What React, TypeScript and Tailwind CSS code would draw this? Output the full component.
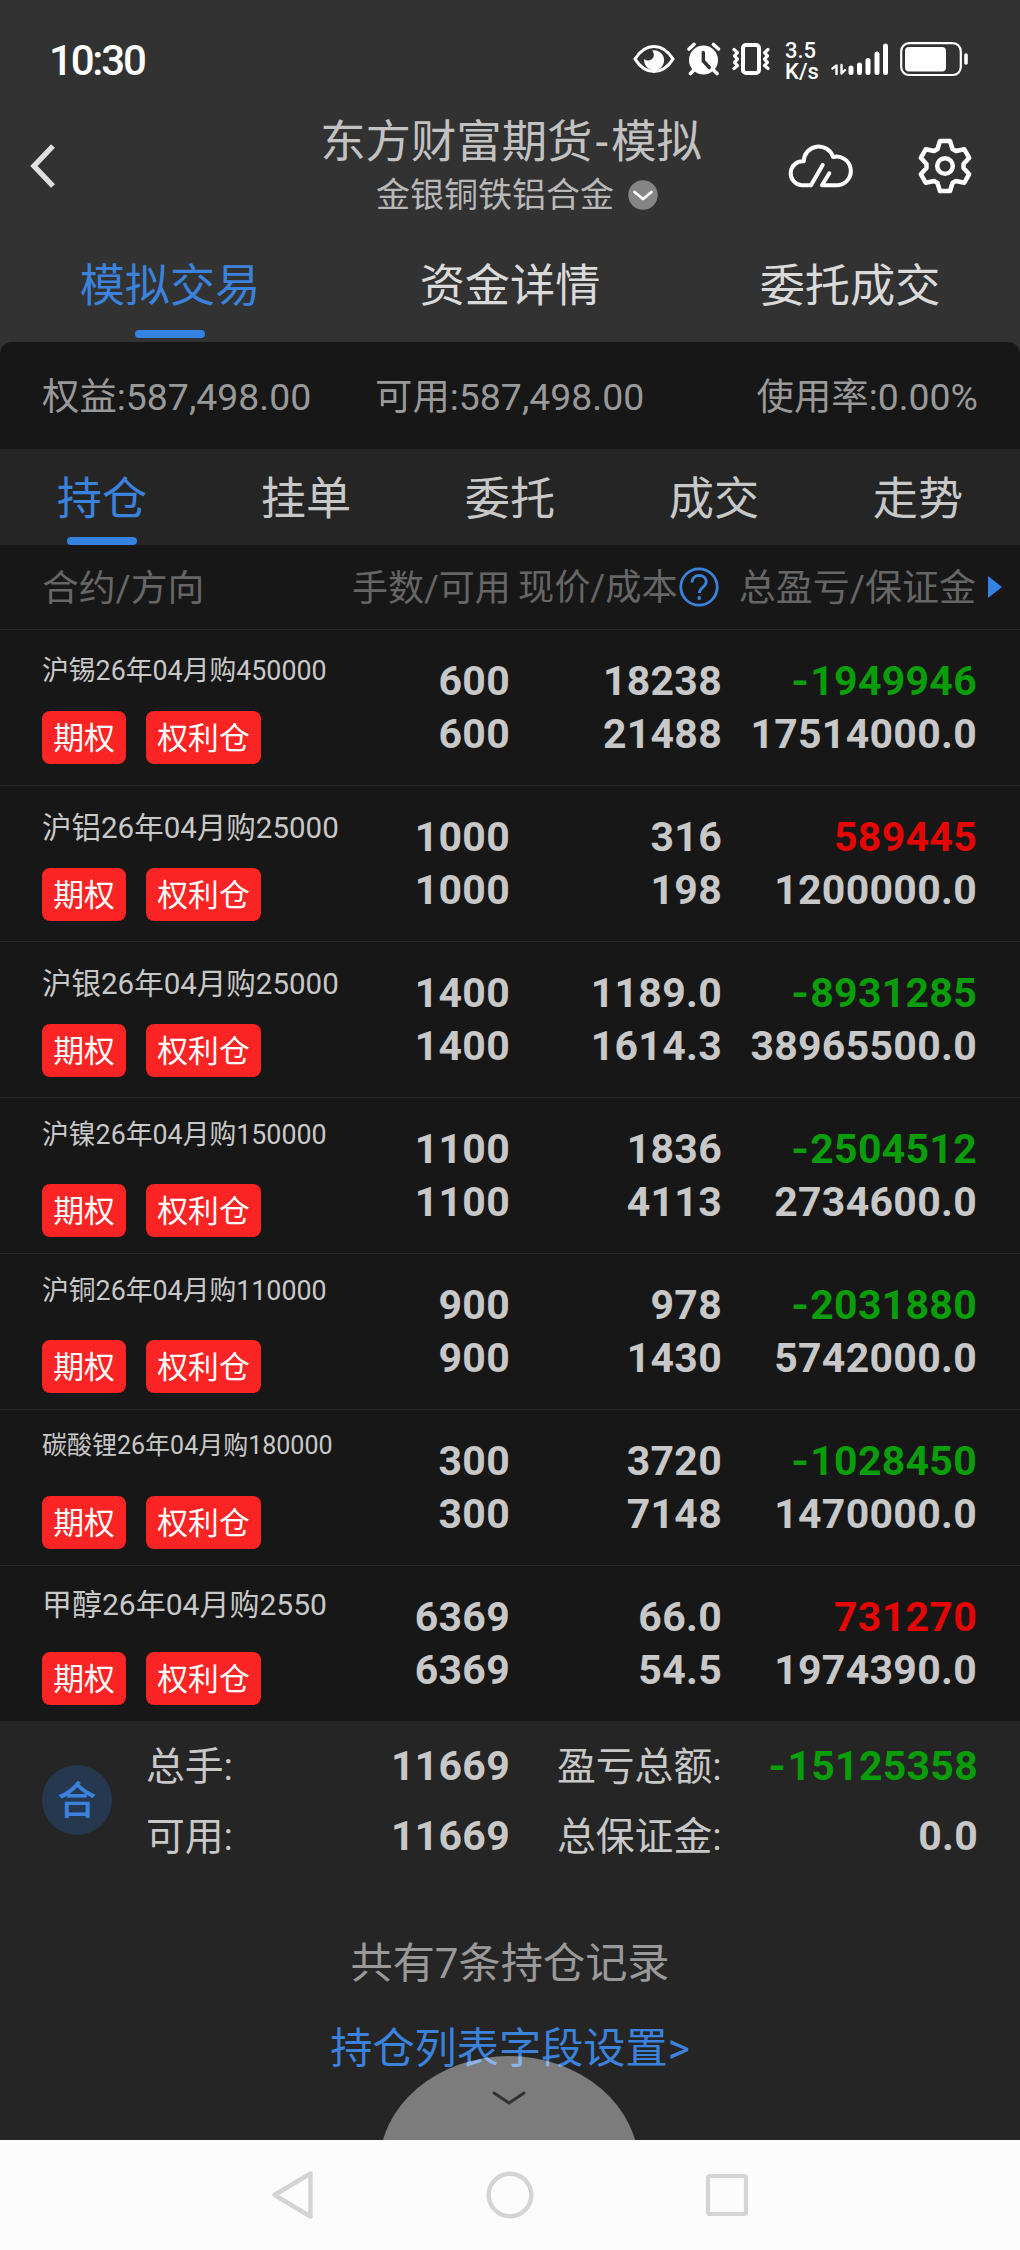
import React, { useState } from 'react';
import clsx from 'clsx';

type Position = {
  name: string;
  nameClass: string;
  tagClass: string;
  lots: [string, string];
  price: [string, string];
  profit: string;
  margin: string;
};

// long contract names shrink to fit the first column
const positions: Position[] = [
  { name: '沪锡26年04月购450000', nameClass: 'text-[26.8px] h-[83px]', tagClass: 'mt-[-2px]', lots: ['600', '600'], price: ['18238', '21488'], profit: '-1949946', margin: '17514000.0' },
  { name: '沪铝26年04月购25000', nameClass: 'text-[29.5px] h-[84px]', tagClass: 'mt-[-2px]', lots: ['1000', '1000'], price: ['316', '198'], profit: '589445', margin: '1200000.0' },
  { name: '沪银26年04月购25000', nameClass: 'text-[29.5px] h-[84px]', tagClass: 'mt-[-2px]', lots: ['1400', '1400'], price: ['1189.0', '1614.3'], profit: '-8931285', margin: '38965500.0' },
  { name: '沪镍26年04月购150000', nameClass: 'text-[26.8px] h-[74px]', tagClass: 'mt-3', lots: ['1100', '1100'], price: ['1836', '4113'], profit: '-2504512', margin: '2734600.0' },
  { name: '沪铜26年04月购110000', nameClass: 'text-[26.8px] h-[74px]', tagClass: 'mt-3', lots: ['900', '900'], price: ['978', '1430'], profit: '-2031880', margin: '5742000.0' },
  { name: '碳酸锂26年04月购180000', nameClass: 'text-[25px] h-[71px]', tagClass: 'mt-[15px]', lots: ['300', '300'], price: ['3720', '7148'], profit: '-1028450', margin: '1470000.0' },
  { name: '甲醇26年04月购2550', nameClass: 'text-[30px] h-[77px]', tagClass: 'mt-[9px]', lots: ['6369', '6369'], price: ['66.0', '54.5'], profit: '731270', margin: '1974390.0' },
];

const mainTabs = ['模拟交易', '资金详情', '委托成交'];
const subTabs = ['持仓', '挂单', '委托', '成交', '走势'];

const profitColor = (value: string) => (value.startsWith('-') ? 'text-[#0a9d0a]' : 'text-[#e60505]');

// the minus sign is drawn a little wider than the font's hyphen
const Profit = ({ value }: { value: string }) => (
  <div className={profitColor(value)}>
    {value.startsWith('-') ? (
      <>
        <span className="inline-block origin-right scale-x-110 pr-[1px]">-</span>
        {value.slice(1)}
      </>
    ) : (
      value
    )}
  </div>
);

const StatusBar = () => (
  <div className="flex h-[109px] items-start justify-between pl-[49px] pr-[51px] pt-10 text-white">
    <span className="text-[42px] font-medium leading-[42px] tracking-[-2.2px]">10:30</span>
    <div className="flex h-10 items-start">
      {/* eye comfort */}
      <svg width="42" height="40" viewBox="0 0 42 40" fill="none">
        <path d="M2 19C7 11 13.500 6.500 21 6.500S35 11 40 19C35 27 28.500 31.500 21 31.500S7 27 2 19Z" stroke="currentColor" strokeWidth="3.200" strokeLinejoin="round" />
        <path d="M19 10.500a10 10 0 1 1-7.800 8.500a5.200 5.200 0 1 0 7.800-8.500Z" fill="currentColor" />
      </svg>
      {/* alarm */}
      <svg className="ml-3" width="34" height="40" viewBox="0 0 34 40" fill="none" stroke="currentColor" strokeLinecap="round">
        <circle cx="16.500" cy="20" r="14.500" fill="currentColor" stroke="none" />
        <path d="M2 9l5-4.500M31.500 9l-5-4.500M7 30l-3.500 3.500M26.500 30l3.500 3.500" strokeWidth="3.600" />
        <path d="M16.300 12.500v8.500l6 6.500" stroke="#323232" strokeWidth="3.400" />
      </svg>
      {/* vibrate */}
      <svg className="ml-[11px]" width="38" height="40" viewBox="0 0 38 40" fill="none" stroke="currentColor" strokeLinecap="round" strokeLinejoin="round">
        <rect x="11" y="5" width="16" height="28" rx="3" strokeWidth="4" />
        <path d="M2 9.500l3.500 3.200-3 3.200 3 3.200-3 3.200 3 3.200L2 28.500M36 9.500l-3.500 3.200 3 3.200-3 3.200 3 3.200-3 3.200L36 28.500" strokeWidth="3.200" />
      </svg>
      <div className="ml-[15px] w-[33px] text-[22px] font-medium leading-[21px]">
        <div>3.5</div>
        <div>K/s</div>
      </div>
      {/* signal */}
      <svg className="ml-[13px]" width="58" height="40" viewBox="0 0 58 40" fill="none" stroke="currentColor" strokeLinecap="round">
        <path d="M1.500 28.500l4-3V34M10.500 25v8.500l3.500-3.500" strokeWidth="2.400" strokeLinejoin="round" />
        <path d="M20 28v4.500M28.500 25v7.500M37 20.500v12M46 14v18.500M54.500 6v26.500" strokeWidth="5" />
      </svg>
      {/* battery */}
      <svg className="ml-[11px]" width="69" height="40" viewBox="0 0 69 40" fill="none">
        <rect x="1.200" y="3.200" width="59.600" height="31.800" rx="8" stroke="currentColor" strokeWidth="2.200" />
        <rect x="5" y="7" width="41" height="24.500" rx="4" fill="currentColor" />
        <path d="M66 15v8" stroke="currentColor" strokeWidth="3.600" strokeLinecap="round" />
      </svg>
    </div>
  </div>
);

const TitleBar = () => (
  <div className="flex h-[117px] items-start justify-between pl-[29px] pr-[47px]">
    <svg className="mt-[34px] shrink-0" width="28" height="46" viewBox="0 0 28 46" fill="none">
      <path d="M24 3L5 23l19 20" stroke="#e0e0e0" strokeWidth="5.400" />
    </svg>
    <div className="flex w-[500px] flex-col items-center pl-[184px]">
      <h1 className="h-[65px] whitespace-nowrap pt-[1px] text-[45.400px] leading-[66px] text-[#c2c2c2]">
        东方财富期货<span className="mx-[3px]">-</span>模拟
      </h1>
      <div className="ml-3 flex h-[42px] items-center gap-[14px]">
        <span className="whitespace-nowrap text-[34px] leading-[44px] text-[#b8b8b8]">金银铜铁铝合金</span>
        <svg className="shrink-0" width="30" height="30" viewBox="0 0 30 30" fill="none">
          <circle cx="15" cy="15" r="14.700" fill="#858585" />
          <path d="M6.500 12l8.500 7 8.500-7" stroke="#fff" strokeWidth="2.800" strokeLinecap="round" strokeLinejoin="round" />
        </svg>
      </div>
    </div>
    <div className="mt-[26px] flex shrink-0">
      <svg width="80" height="60" viewBox="0 0 80 60" fill="none" stroke="#fff" strokeWidth="4" strokeLinecap="round" strokeLinejoin="round">
        <path d="M41.700 30L30 50.300h-9.300a12 12 0 0 1 2-24A15 15 0 0 1 52 22a14.400 14.400 0 1 1 5 28.300H41l7.300-12" />
      </svg>
      <svg className="ml-14" width="56" height="60" viewBox="-28 -31 56 60" fill="none" stroke="#fff" strokeWidth="4.500" strokeLinejoin="round">
        <path d="M-7.500-17L-5-25H5L7.500-17 11-15l8.200-1.800 5 8.600L18.500-2v4l5.700 6.200-5 8.600L11 15l-3.500 2L5 25H-5l-2.500-8-3.500-2-8.200 1.800-5-8.600L-18.500 2v-4l-5.700-6.200 5-8.600L-11-15Z" />
        <circle r="7.800" />
      </svg>
    </div>
  </div>
);

type TabBarProps = {
  tabs: string[];
  active: number;
  onChange: (index: number) => void;
  className: string;
};

const TabBar = ({ tabs, active, onChange, className }: TabBarProps) => (
  <div className={clsx('flex text-[45.200px]', className)}>
    {tabs.map((tab, i) => (
      <button
        key={tab}
        onClick={() => onChange(i)}
        className={clsx('relative flex flex-1 items-center justify-center pt-[5px]', i === active && 'text-[#3b82dc]')}
      >
        {tab}
        {i === active && (
          <span className="absolute bottom-[var(--bar)] left-1/2 h-2 w-[70px] -translate-x-1/2 rounded-full bg-[#3482e2]" />
        )}
      </button>
    ))}
  </div>
);

const PositionRow = ({ item }: { item: Position }) => (
  <div className="flex h-[156px] border-t border-[#272727] pl-[42px] text-[#c8c8c8]">
    <div className="w-[300px] whitespace-nowrap">
      <div className={clsx('flex items-center', item.nameClass)}>{item.name}</div>
      <div className={clsx('flex gap-5 text-[30.800px] leading-[55px] text-white', item.tagClass)}>
        <span className="h-[53px] w-[84px] rounded-lg bg-[#fb2424] text-center">期权</span>
        <span className="h-[53px] w-[115px] rounded-lg bg-[#fb2424] text-center">权利仓</span>
      </div>
    </div>
    <div className="flex pt-[25px] text-right text-[41px] font-bold leading-[53px] tracking-[0.3px]">
      <div className="w-[168px]">
        <div>{item.lots[0]}</div>
        <div>{item.lots[1]}</div>
      </div>
      <div className="w-[212px]">
        <div>{item.price[0]}</div>
        <div>{item.price[1]}</div>
      </div>
      <div className="w-[255px]">
        <Profit value={item.profit} />
        <div>{item.margin}</div>
      </div>
    </div>
  </div>
);

const ColumnHeader = () => (
  <div className="flex h-[84px] items-center whitespace-nowrap pl-[42px] text-[37px] text-[#666]">
    <div className="w-[310px] pt-[3px] text-[36.800px]">合约/方向</div>
    <div className="w-[166px] pt-[3px] text-[36px]">手数/可用</div>
    <div className="pt-[3px] text-[36.200px]">现价/成本</div>
    <svg className="ml-[1px] shrink-0" width="40" height="40" viewBox="0 0 40 40" fill="none" stroke="#3b82dc" strokeWidth="2.800">
      <circle cx="20" cy="20" r="18.200" />
      <path d="M13 15.500c0-4.300 3-7 7.200-7s7 2.600 7 6.300c0 5.200-6.900 6-6.900 11.200" />
      <circle cx="20.200" cy="31" r="1.900" fill="#3b82dc" stroke="none" />
    </svg>
    <div className="ml-5 pt-[3px]">总盈亏/保证金</div>
    <svg className="ml-3 shrink-0" width="14" height="24" viewBox="0 0 14 24">
      <path d="M0 1l14 11L0 23Z" fill="#3482e2" />
    </svg>
  </div>
);

const Summary = () => (
  <div className="flex h-[174px] items-center whitespace-nowrap pl-[42px] text-[38.800px] leading-[70px] text-[#c8c8c8]">
    <div className="mb-4 h-[70px] w-[70px] rounded-full bg-[#26384f] text-center text-[39px] font-medium leading-[72px] text-[#3b82dc]">合</div>
    <div className="mb-[13px] ml-[34px] w-[151px]">
      <div>总手:</div>
      <div>可用:</div>
    </div>
    <div className="mb-[14px] w-[213px] text-right text-[41px] font-bold tracking-[0.3px]">
      <div>11669</div>
      <div>11669</div>
    </div>
    <div className="mb-[13px] ml-[47px] w-[166px]">
      <div>盈亏总额:</div>
      <div>总保证金:</div>
    </div>
    <div className="mb-[14px] w-[255px] text-right text-[41px] font-bold tracking-[0.3px]">
      <Profit value="-15125358" />
      <div>0.0</div>
    </div>
  </div>
);

const NavBar = () => (
  <div className="flex h-[110px] items-center justify-between bg-[#fcfcfc] pl-[271px] pr-[271px]">
    <svg width="44" height="50" viewBox="0 0 44 50" fill="none">
      <path d="M39.500 3.500v43L3.500 25Z" stroke="#d4d4d4" strokeWidth="4.400" strokeLinejoin="round" />
    </svg>
    <svg width="50" height="50" viewBox="0 0 50 50" fill="none">
      <circle cx="25" cy="25" r="21.300" stroke="#d4d4d4" strokeWidth="4.400" />
    </svg>
    <svg width="44" height="50" viewBox="0 0 44 50" fill="none">
      <rect x="3" y="6" width="38" height="38" rx="2" stroke="#d4d4d4" strokeWidth="4.200" />
    </svg>
  </div>
);

const App = () => {
  const [mainTab, setMainTab] = useState(0);
  const [subTab, setSubTab] = useState(0);

  return (
    <div className="flex h-[2250px] w-[1020px] flex-col overflow-hidden bg-[#252525] font-[Roboto,'Noto_Sans_CJK_SC',sans-serif]">
      <div className="bg-[#323232]">
        <StatusBar />
        <TitleBar />
        <TabBar tabs={mainTabs} active={mainTab} onChange={setMainTab} className="h-[116px] text-[#dadada] [--bar:4px]" />
        <div className="flex h-[107px] items-center rounded-t-xl bg-[#171717] pl-[42px] pr-[42px] pt-[3px] text-[37.400px] text-[#999]">
          <span className="w-[333px]">权益:587,498.00</span>
          <span>可用:587,498.00</span>
          <span className="ml-auto">使用率:0.00%</span>
        </div>
      </div>
      <TabBar tabs={subTabs} active={subTab} onChange={setSubTab} className="h-24 text-[#c8c8c8] [--bar:0px]" />
      <div className="bg-[#171717]">
        <ColumnHeader />
        {positions.map((item) => (
          <PositionRow key={item.name} item={item} />
        ))}
      </div>
      <Summary />
      <div className="relative flex flex-1 flex-col items-center overflow-hidden text-[42.200px] leading-[60px]">
        <p className="mt-[39px] text-[#999]">共有7条持仓记录</p>
        <button className="mt-[25px] text-[#3b82dc]">持仓列表字段设置&gt;</button>
        <div className="absolute left-[379px] top-[161px] h-[222px] w-[260px] rounded-[50%] bg-white/40">
          <svg className="mx-auto mt-[34px]" width="36" height="16" viewBox="0 0 36 16" fill="none">
            <path d="M3 3l15 10L33 3" stroke="#333" strokeWidth="3" strokeLinecap="round" strokeLinejoin="round" />
          </svg>
        </div>
      </div>
      <NavBar />
    </div>
  );
};

export default App;
